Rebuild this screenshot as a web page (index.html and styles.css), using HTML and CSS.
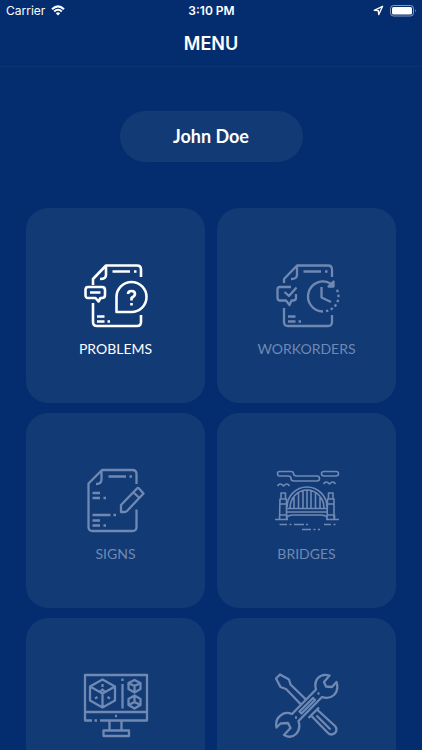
FILE: index.html
```html
<!DOCTYPE html>
<html lang="en">
<head>
<meta charset="utf-8">
<meta name="viewport" content="width=device-width, initial-scale=1">
<title>Menu</title>
<link rel="stylesheet" href="styles.css">
</head>
<body>
<header class="top">
  <div class="status">
    <div class="status-side">
      <span>Carrier</span>
      <svg class="wifi" viewBox="0 0 14 11" aria-hidden="true">
        <path d="M1 4.200Q7-1.500 13 4.200M3.200 6.600Q7 3 10.800 6.600" fill="none" stroke="currentColor" stroke-width="2"/>
        <path d="M4.800 8.200Q7 6.200 9.200 8.200L7 10.500Z" fill="currentColor"/>
      </svg>
    </div>
    <time class="clock">3:10 PM</time>
    <div class="status-side status-end">
      <svg class="location" viewBox="0 0 11 11" aria-hidden="true"><path d="M1.200 5.300L9.600 1.300L5.700 9.600L5.300 5.600Z" fill="none" stroke="currentColor" stroke-width="1.300" stroke-linejoin="round"/></svg>
      <svg class="battery" viewBox="0 0 27 12" aria-hidden="true">
        <rect x=".5" y=".5" width="23" height="10.500" rx="3" fill="none" stroke="currentColor" opacity=".5"/>
        <rect x="2" y="2" width="20" height="7.500" rx="1.500" fill="currentColor"/>
        <path d="M25 4Q26.600 5.700 25 7.500Z" fill="currentColor" opacity=".5"/>
      </svg>
    </div>
  </div>
  <h1 class="title">MENU</h1>
</header>
<main class="content">
  <button class="user" type="button">John Doe</button>
  <nav class="grid" aria-label="Menu">
    <button class="card" type="button">
      <svg class="icon" viewBox="0 0 66 66" aria-hidden="true">
        <path d="M10 22V16L23 2.500H54Q58 2.500 58 6.500V14M10 40V59Q10 63 14 63H54Q58 63 58 59V52M23 3V12Q23 16 17 16"/>
        <path d="M29.500 8.500H47M51 8.500H53.500M14 53.500H21.500M14 58.500H21.500M24.500 58.500H27"/>
        <path d="M5 24H19Q22 24 22 27V32Q22 35 19 35H17.500L15.500 38.500L12.500 35H5Q2.500 35 2.500 32V27Q2.500 24 5 24ZM7 29.500H17.500"/>
        <path d="M33.500 49V34A15 15 0 1 1 48.500 49ZM45 31Q45 28 48.500 28T52 31Q52 33 48.500 35V37.500M48.500 40V42.500"/>
      </svg>
      <span class="label">PROBLEMS</span>
    </button>
    <button class="card" type="button" disabled>
      <svg class="icon" viewBox="0 0 66 66" aria-hidden="true">
        <path d="M10 20V16L23 2.500H54Q58 2.500 58 6.500V14M10 45V59Q10 63 14 63H54Q58 63 58 59V52M23 3V12Q23 16 17 16"/>
        <path d="M29.500 8.500H47M51 8.500H53.500M14 53.500H21.500M14 58.500H21.500M24.500 58.500H27"/>
        <path d="M17 24H6Q3.500 24 3.500 26.500V35Q3.500 37.500 6 37.500H12L15.500 42L17.500 37.500H19Q22 37.500 22 35V31M10.500 29L15 33L22.500 24.500"/>
        <path d="M49 48.500A15 15 0 1 1 56.500 20.500M47.500 24V34.500L57 39"/>
        <path d="M59.500 18.500V23.500H54.500Z" fill="currentColor"/>
        <path d="M52 48.200A15 15 0 0 0 62.500 26" stroke-dasharray="2.500 2.500"/>
      </svg>
      <span class="label">WORKORDERS</span>
    </button>
    <button class="card" type="button" disabled>
      <svg class="icon" viewBox="0 0 66 66" aria-hidden="true">
        <path d="M53.500 16V6Q53.500 2 49.500 2H19L5.500 15.500V59Q5.500 63 9.500 63H49.500Q53.500 63 53.500 59V41.500M18.500 2.500V11.500Q18.500 16 13 16"/>
        <path d="M25.500 8.500H43M46.500 8.500H49M9.500 25H17M9.500 30H17M20.500 30H23M9.500 47H27.500M30.500 47H33M9.500 52.500H17M9.500 57.500H17M20.500 57.500H23"/>
        <path d="M38 44V37L54 20.500Q55 19.500 56 20.500L60.500 25.500L44 43Q43 44 41.500 44ZM50.500 24.500L56.500 30"/>
      </svg>
      <span class="label">SIGNS</span>
    </button>
    <button class="card" type="button" disabled>
      <svg class="icon icon-fine" viewBox="0 0 66 66" aria-hidden="true">
        <path d="M5.500 3.500H17Q19.500 3.500 19.500 5.500T22 8H43Q45.500 8 45.500 10.500T43 13H20Q17 13 17 10.500T14.500 8H5.500Q3.500 8 3.500 5.750T5.500 3.500ZM50 3.500H62Q64.500 3.500 64.500 5.750T62 8H50Q47.500 8 47.500 5.750T50 3.500Z"/>
        <path d="M3.500 18Q6 14 9.500 18Q13 14 15.500 18M49.500 16Q52 12 55.500 16Q59 12 61.500 16"/>
        <path d="M13 39A20 20 0 0 1 53 39M16 40A17 18 0 0 1 50 40M20 28V40M24.500 24V40M29 22V40M33 21.500V40M37 22V40M41.500 24V40M46 28V40M13 40.500H53M13 44H53M13 49Q15 47 19 47H47Q51 47 53 49"/>
        <path d="M7 31V25H11.500V31M6 31H12.500V51.500H5.500ZM6 36H12.500M5.500 47H13V51.500M54.500 31V25H59V31M53.500 31H60V51.500H53ZM53.500 36H60M53 47H60.500V51.500M1 51.500H14M52 51.500H65"/>
        <path d="M5.500 56.500H13M15.500 56.500H17.500M20 56.500H30M32 56.500H34M50 56.500H57M59.500 56.500H61.500M28 61.500H37M39.500 61.500H41.500M44 61.500H46"/>
      </svg>
      <span class="label">BRIDGES</span>
    </button>
    <button class="card" type="button" aria-label="Computer" disabled>
      <svg class="icon" viewBox="0 0 66 66" aria-hidden="true">
        <path d="M9 47.500H2V2H64V47.500H17M11.500 47.500H14M2 39H64M26.500 47.500V57.500M38.500 47.500V57.500M20.500 57.500H46V63H20.500ZM32 43H34"/>
        <path d="M19.500 6.500L32 13.500V27.500L19.500 34.500L7 27.500V13.500ZM7 13.500L19.500 20.500L32 13.500M19.500 20.500V34.500M19.500 11V14M12 25.500L14.500 24M27 25.500L24.500 24M17 19L19.500 16.500L22 19"/>
        <path d="M39.500 11V35.500M39.500 5.500V8M51.500 7L57.500 10V16L51.500 19.500L45.500 16V10ZM45.500 10L51.500 13L57.500 10M51.500 13V19.500M51.500 22.500L57.500 26V32L51.500 35.500L45.500 32V26ZM51.500 22.500V29L45.500 32M51.500 29L57.500 32"/>
      </svg>
    </button>
    <button class="card" type="button" aria-label="Tools" disabled>
      <svg class="icon" viewBox="0 0 66 66" aria-hidden="true">
        <path d="M32 26.500L16.500 11.500L15 6.500L6 1.500L2 5.500L6.500 14L12 16L27 31.500"/>
        <path d="M55.500 2.500Q48 .5 44 5Q40 9 42 16.500L18 41Q11 38 6 43Q1 47 2.500 54.500L6.500 50.500L14 50L16.500 55L10 62Q17 66 22 61Q27 56 24.500 48L48 24Q55 26.500 60 22Q65 17 62.500 9L58 14L52 13.500L50 9Z"/>
        <path d="M25.500 38.500L39 25L41 27L27.500 40.500ZM21 44.500H23M43.500 20.500H45.500M34.500 45L45 34.500M37 42.500L54 60Q57 63 61 60Q64 56.500 61 53L43 36.500M42.500 42.500L56.500 56.500"/>
      </svg>
    </button>
  </nav>
</main>
</body>
</html>
```
FILE: styles.css
```css
* {
  box-sizing: border-box;
}

body {
  margin: 0;
  height: 100vh;
  display: flex;
  flex-direction: column;
  background: #042d70;
  color: #fff;
  font-family: Lato, "Liberation Sans", sans-serif;
}

.top {
  flex: none;
  border-bottom: 1px solid #0d3472;
  font-family: Inter, "Liberation Sans", sans-serif;
}

.status {
  display: grid;
  grid-template-columns: 1fr auto 1fr;
  align-items: center;
  height: 22px;
  padding: 0 5px 1px 6px;
  font-size: 12px;
}

.status-side {
  display: flex;
  align-items: center;
  gap: 6px;
}

.status-end {
  justify-content: flex-end;
}

.clock {
  font-weight: 600;
}

.wifi {
  width: 14px;
  height: 11px;
}

.location {
  width: 11px;
  height: 11px;
}

.battery {
  width: 27px;
  height: 12px;
}

.title {
  margin: 0;
  padding: 9px 0 10px;
  font-size: 18px;
  font-weight: 600;
  line-height: 25px;
  text-align: center;
}

.content {
  flex: 1;
  min-height: 0;
  overflow-y: auto;
  scrollbar-width: none;
  padding: 44px 26px 24px;
}

button {
  border: 0;
  background: #123a75;
  color: inherit;
  font-family: inherit;
}

.user {
  display: block;
  min-width: 183px;
  margin: 0 auto 46px;
  padding: 14px 32px;
  border-radius: 26px;
  font-size: 18px;
  font-weight: 700;
  line-height: 23px;
}

.grid {
  display: grid;
  grid-template-columns: 1fr 1fr;
  gap: 10px 12px;
}

.card {
  display: flex;
  flex-direction: column;
  align-items: center;
  gap: 10px;
  min-height: 195px;
  padding: 55px 0 44px;
  border-radius: 22px;
}

.card:disabled {
  color: #7089b3;
}

.icon {
  width: 66px;
  height: 66px;
  fill: none;
  stroke: currentColor;
  stroke-width: 2.6;
  stroke-linejoin: round;
}

.card:disabled .icon {
  stroke-width: 2.3;
}

.card:disabled .icon-fine {
  stroke-width: 1.6;
}

.label {
  font-size: 14px;
  line-height: 20px;
}
```
